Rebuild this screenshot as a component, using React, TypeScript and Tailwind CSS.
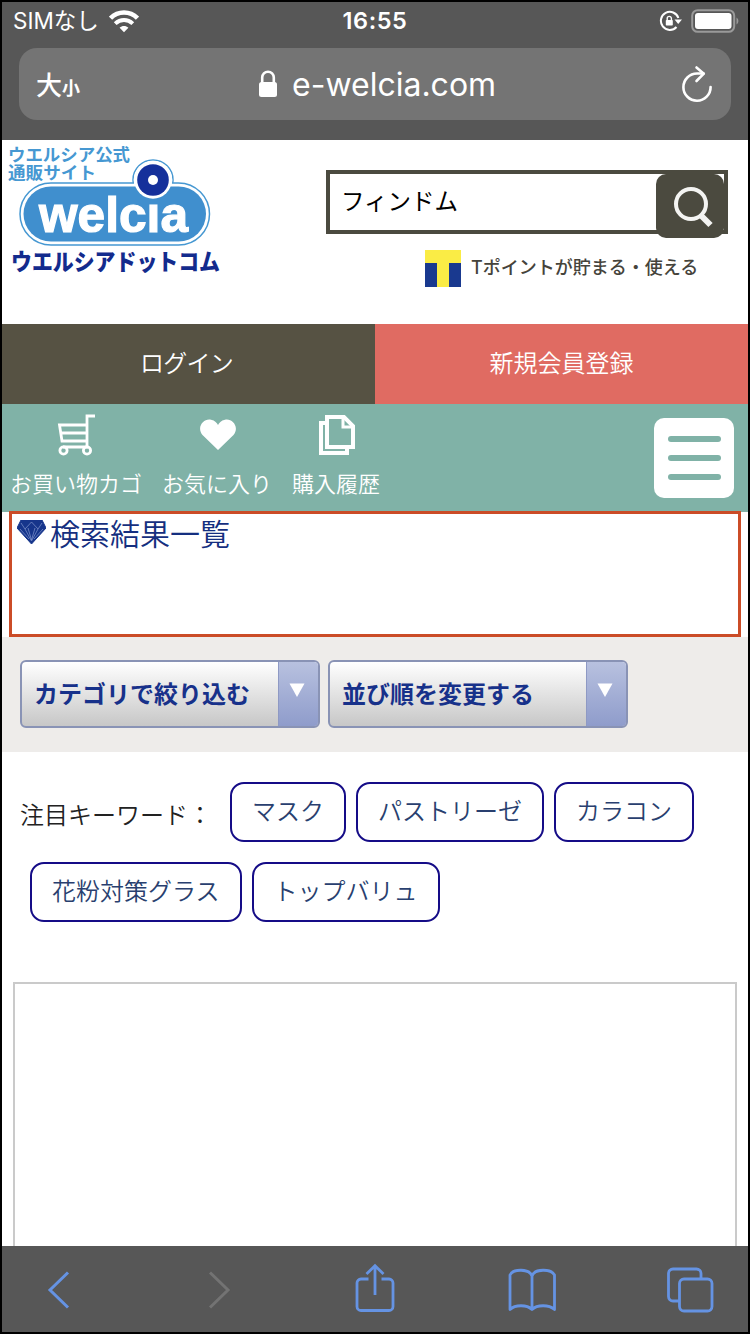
import type { ReactNode } from "react";

const keywordRows = [
  ["マスク", "パストリーゼ", "カラコン"],
  ["花粉対策グラス", "トップバリュ"],
];

function StatusBar() {
  return (
    <div className="grid h-[38px] grid-cols-3 items-center text-white">
      <div className="flex items-center gap-2.5 pl-[11px]">
        <span className="text-[22.5px] leading-none whitespace-nowrap">SIMなし</span>
        <svg width="30" height="23" viewBox="0 0 30 23" fill="none" stroke="white">
          <path d="M1.500 8.200C9 0.500 21 0.500 28.500 8.200" strokeWidth="4.600" />
          <path d="M6.200 13.600C11.500 8.700 18.500 8.700 23.800 13.600" strokeWidth="4" />
          <path d="M15 22.200L10.600 17.700C13.100 15.500 16.900 15.500 19.400 17.700Z" fill="white" stroke="none" />
        </svg>
      </div>
      <span className="text-center text-[23.5px] leading-none font-semibold tracking-[0.6px]">
        16:55
      </span>
      <div className="flex items-center justify-end gap-[9px] pr-[9px]">
        <svg width="23" height="22" viewBox="0 0 23 22" fill="none" stroke="white">
          <path d="M19.400 8A9 9 0 1 0 17.500 17" strokeWidth="2" />
          <path d="M15.500 9.500H23L19.200 14Z" fill="white" stroke="none" />
          <rect x="6.800" y="10" width="7" height="5.600" rx="0.800" fill="white" stroke="none" />
          <path d="M8.200 10.500V8.500a2.100 2.100 0 0 1 4.200 0V10.500" strokeWidth="1.400" />
        </svg>
        <svg width="48" height="24" viewBox="0 0 48 24">
          <rect x="1.200" y="1.200" width="42" height="21.600" rx="5.500" fill="none" stroke="#9a9a9a" strokeWidth="2" />
          <rect x="4" y="4" width="36.500" height="16" rx="3" fill="white" />
          <path d="M45.500 8.500C48 10 48 14 45.500 15.500Z" fill="#9a9a9a" />
        </svg>
      </div>
    </div>
  );
}

function AddressBar() {
  return (
    <div className="mx-[17px] mt-2 mb-5 flex h-[72px] items-center rounded-[18px] bg-[#747474] text-white">
      <div className="flex w-[239px] items-baseline pt-[3px] pl-[17px] leading-none">
        <span className="text-[26px] font-medium">大</span>
        <span className="text-[18px] font-bold">小</span>
      </div>
      <svg width="20" height="28" viewBox="0 0 20 28" fill="none">
        <rect x="1" y="12" width="18" height="15" rx="2.500" fill="white" />
        <path d="M4.200 13V7.500a5.800 5.800 0 0 1 11.600 0V13" stroke="white" strokeWidth="2.600" />
      </svg>
      <span className="ml-[14px] pt-0.5 text-[32px] leading-none whitespace-nowrap">e-welcia.com</span>
      <svg className="mr-[18px] ml-auto" width="32" height="38" viewBox="0 0 32 38" fill="none" stroke="white" strokeWidth="2.600" strokeLinecap="round" strokeLinejoin="round">
        <path d="M22.500 8.500H16A13.600 13.600 0 1 0 29.600 22" />
        <path d="M15.500 2.500L22.800 8.700L15.500 16" />
      </svg>
    </div>
  );
}

function Logo() {
  return (
    <svg className="overflow-visible" width="230" height="145" viewBox="2 0 230 145">
      <g fill="#4698d2" fontSize="17" fontWeight="700">
        <text x="8" y="21" textLength="122" lengthAdjust="spacingAndGlyphs">ウエルシア公式</text>
        <text x="8" y="38.500" textLength="88" lengthAdjust="spacingAndGlyphs">通販サイト</text>
      </g>
      <circle cx="153" cy="40" r="20" fill="white" stroke="#4698d2" strokeWidth="1.500" />
      <rect x="20" y="43" width="189.500" height="62" rx="31" fill="white" stroke="#4698d2" strokeWidth="1.500" />
      <circle cx="153" cy="40" r="19.300" fill="white" />
      <rect x="23.500" y="46.500" width="182.500" height="55" rx="27.500" fill="#408fce" />
      <circle cx="153" cy="40" r="18.700" fill="white" />
      <circle cx="153" cy="40" r="15.800" fill="#15309b" />
      <circle cx="153" cy="40" r="5" fill="white" />
      <text
        x="39"
        y="91.500"
        className="font-['Liberation_Sans']"
        fontSize="50"
        fontWeight="700"
        fill="white"
        stroke="white"
        strokeWidth="1.200"
        textLength="149"
        lengthAdjust="spacingAndGlyphs"
      >
        welcıa
      </text>
      <text x="11" y="130" fontSize="23" fontWeight="900" fill="#132b8d" textLength="209" lengthAdjust="spacingAndGlyphs">
        ウエルシアドットコム
      </text>
    </svg>
  );
}

function SiteHeader() {
  return (
    <header className="flex h-[184px] justify-between bg-white">
      <Logo />
      <div className="mt-[30px] mr-5 flex w-[402px] flex-col">
        <div className="relative h-16 border-4 border-[#4b4a3f] pt-[11px] pl-[11px] text-[23.500px] leading-[34px] text-black">
          フィンドム
          <button className="absolute top-0 right-0 flex h-16 w-[68px] items-center justify-center rounded-[10px] bg-[#4b4a3f]">
            <svg className="mt-0.5 ml-1.5" width="42" height="44" viewBox="0 0 42 44" fill="none" stroke="#f4f4f2">
              <circle cx="19" cy="19" r="15" strokeWidth="4" />
              <path d="M29 30.500L38.500 40" strokeWidth="6" />
            </svg>
          </button>
        </div>
        <div className="mt-4 ml-[99px] flex items-center gap-[10px]">
          <svg width="36" height="37" viewBox="0 0 36 37">
            <rect width="36" height="37" fill="#19398f" />
            <path d="M0 0H36V13H24V37H12V13H0Z" fill="#faec45" />
          </svg>
          <span className="-mt-0.5 text-[18px] leading-6 font-medium whitespace-nowrap text-[#45433b]">
            Tポイントが貯まる・使える
          </span>
        </div>
      </div>
    </header>
  );
}

function MenuItem({ label, children }: { label: string; children: ReactNode }) {
  return (
    <a className="flex flex-col items-center text-[22px] leading-[30px] font-[350] whitespace-nowrap text-white">
      <span className="mb-[13px] flex h-[42px] items-center pl-0.5">{children}</span>
      {label}
    </a>
  );
}

function GlobalMenu() {
  return (
    <nav className="flex h-[108px] items-start bg-[#80b2a7] pt-[10px] pl-2">
      <div className="flex gap-5">
        <MenuItem label="お買い物カゴ">
          <svg width="40" height="42" viewBox="0 0 40 42" fill="none" stroke="white" strokeWidth="2.800">
            <path d="M38 2H30V33H6" />
            <path d="M30 11H2.500L5 27H30M4 19H30" />
            <circle cx="6.500" cy="36.500" r="3.600" />
            <circle cx="30" cy="36.500" r="3.600" />
          </svg>
        </MenuItem>
        <MenuItem label="お気に入り">
          <svg width="36" height="32" viewBox="0 0 36 32" fill="white">
            <path d="M18 31L2.500 16C-4 8 4 -1 11 0.800C15 1.600 17 4 18 6C19 4 21 1.600 25 0.800C32 -1 40 8 33.500 16Z" />
          </svg>
        </MenuItem>
        <MenuItem label="購入履歴">
          <svg width="38" height="42" viewBox="0 0 38 42" fill="none" stroke="white" strokeWidth="4">
            <path d="M9 3H26L35 12V33H9Z" />
            <path d="M25 3V13H35" strokeWidth="3" />
            <path d="M9 9H3V39H29V33" />
          </svg>
        </MenuItem>
      </div>
      <button className="mt-1 mr-[14px] ml-auto flex size-20 flex-col items-center justify-center gap-[13px] rounded-[10px] bg-white">
        <span className="h-1.5 w-[53px] rounded-full bg-[#80b2a7]" />
        <span className="h-1.5 w-[53px] rounded-full bg-[#80b2a7]" />
        <span className="h-1.5 w-[53px] rounded-full bg-[#80b2a7]" />
      </button>
    </nav>
  );
}

function ResultHeading() {
  return (
    <div className="relative mx-[7px] -mt-px flex h-[126px] items-start gap-1 border-[3px] border-[#cb4c27] bg-white pl-[5px]">
      <svg className="mt-1.5" width="29" height="24" viewBox="0 0 29 24">
        <path d="M4 0H25L29 8L14.500 24L0 8Z" fill="#16358b" stroke="#16358b" strokeLinejoin="round" />
        <path
          d="M4 3L8 9L14.500 2L21 9L25 3M8 9L14.500 21L21 9M11 8L14.500 20L18 8M3 9L12 19M26 9L17 19"
          fill="none"
          stroke="#8296cf"
          strokeWidth="0.700"
        />
      </svg>
      <h1 className="text-[30px] leading-[40px] font-[350] text-[#152f80]">検索結果一覧</h1>
    </div>
  );
}

function FilterButton({ label }: { label: string }) {
  return (
    <button className="flex h-[68px] w-[300px] overflow-hidden rounded-[6px] border-2 border-[#8993b5] bg-linear-to-b from-white to-[#c7c7c7] text-left">
      <span className="grow pl-3 text-[24px] leading-[66px] font-bold text-[#17318a]">
        {label}
      </span>
      <span className="flex w-10 justify-center border-l border-[#8e99c4] bg-linear-to-b from-[#b8c1df] to-[#8f9ccb] pt-[21px] pr-1">
        <svg width="16" height="15" viewBox="0 0 16 15">
          <path d="M0.500 0.500H15.500L8 14Z" fill="white" />
        </svg>
      </span>
    </button>
  );
}

function Keywords() {
  return (
    <section className="flex flex-col gap-5 pt-[30px] text-[24px] leading-[56px] font-[350]">
      {keywordRows.map((row, i) => (
        <div key={i} className="flex h-[60px] gap-[10px] pl-7">
          {i === 0 ? (
            <span className="-ml-[10px] w-[200px] pt-1.5 whitespace-nowrap text-[#222]">
              注目キーワード：
            </span>
          ) : null}
          {row.map((word) => (
            <a
              key={word}
              className="rounded-[14px] border-2 border-[#150c87] px-5 whitespace-nowrap text-[#293f6f]"
            >
              {word}
            </a>
          ))}
        </div>
      ))}
    </section>
  );
}

function Toolbar() {
  return (
    <footer className="h-[86px] bg-[#575757] pt-4">
      <div className="flex pl-[45px]">
        <svg width="24" height="54" viewBox="0 0 24 54" fill="none" stroke="#6593e3" strokeWidth="3">
          <path d="M21 10.500L3 28L21 45.500" />
        </svg>
        <svg className="ml-[137px]" width="24" height="54" viewBox="0 0 24 54" fill="none" stroke="#737373" strokeWidth="3">
          <path d="M2 10.500L20 28L2 45.500" />
        </svg>
        <svg className="ml-[123px]" width="40" height="54" viewBox="0 0 40 54" fill="none" stroke="#6593e3" strokeWidth="2.800">
          <path d="M13.500 17H6A4 4 0 0 0 2 21V44.500A4 4 0 0 0 6 48.500H34A4 4 0 0 0 38 44.500V21A4 4 0 0 0 34 17H26.500" />
          <path d="M20 33V4M11.500 12L20 3.800L28.500 12" />
        </svg>
        <svg className="ml-28" width="50" height="54" viewBox="0 0 50 54" fill="none" stroke="#6593e3" strokeWidth="2.800" strokeLinejoin="round">
          <path d="M25 47.500V14C22.500 6.500 6 6.500 3 13V47.500C8 42.500 20 42.500 25 47.500C30 42.500 42 42.500 47.500 47.500V13C44 6.500 27.500 6.500 25 14" />
        </svg>
        <svg className="ml-[109px]" width="50" height="54" viewBox="0 0 50 54" fill="none" stroke="#6593e3" strokeWidth="2.800">
          <path d="M13 39H7A4.500 4.500 0 0 1 2.500 34.500V11.500A4.500 4.500 0 0 1 7 7H30.500A4.500 4.500 0 0 1 35 11.500V17" />
          <rect x="13.500" y="17" width="32.500" height="32" rx="4.500" />
        </svg>
      </div>
    </footer>
  );
}

export default function App() {
  return (
    <div className="flex h-[1334px] w-[750px] flex-col overflow-hidden border-2 border-black bg-white font-['Inter','Noto_Sans_CJK_JP',sans-serif]">
      <div className="h-[138px] shrink-0 bg-[#575757]">
        <StatusBar />
        <AddressBar />
      </div>
      <SiteHeader />
      <div className="grid h-20 shrink-0 grid-cols-2 text-center text-[24px] leading-[79px] font-[350] text-white">
        <a className="bg-[#565243] pr-1 tracking-[-0.8px]">ログイン</a>
        <a className="bg-[#e06b62]">新規会員登録</a>
      </div>
      <GlobalMenu />
      <ResultHeading />
      <div className="flex h-[115px] shrink-0 gap-2 bg-[#eeecea] pt-[23px] pl-[18px]">
        <FilterButton label="カテゴリで絞り込む" />
        <FilterButton label="並び順を変更する" />
      </div>
      <Keywords />
      <div className="mx-[11px] mt-[60px] grow border-2 border-b-0 border-[#cacaca]" />
      <Toolbar />
    </div>
  );
}
